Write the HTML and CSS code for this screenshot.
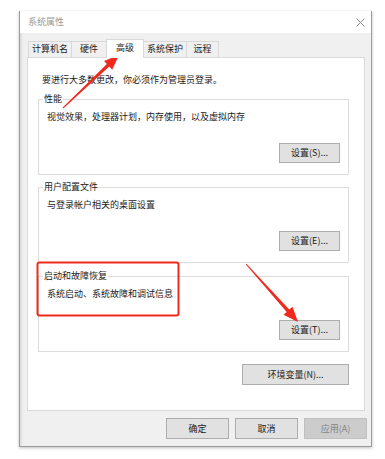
FILE: index.html
```html
<!DOCTYPE html>
<html lang="zh-CN">
<head>
<meta charset="utf-8">
<title>系统属性</title>
<link rel="stylesheet" href="styles.css">
</head>
<body>
<div class="window">
  <div class="titlebar">
    <span class="title">系统属性</span>
    <svg class="close" width="9" height="9" viewBox="0 0 9 9"><path d="M0.5 0.5L8.5 8.5M8.5 0.5L0.5 8.5" stroke="#8c8c8c" stroke-width="1" fill="none"/></svg>
  </div>
  <div class="tabs">
    <div class="tab t1">计算机名</div>
    <div class="tab t2">硬件</div>
    <div class="tab t3 active">高级</div>
    <div class="tab t4">系统保护</div>
    <div class="tab t5">远程</div>
  </div>
  <div class="panel">
    <p class="intro">要进行大多数更改，你必须作为管理员登录。</p>
    <fieldset class="group">
      <legend>性能</legend>
      <p class="desc">视觉效果，处理器计划，内存使用，以及虚拟内存</p>
      <div class="row"><button class="btn small">设置(S)...</button></div>
    </fieldset>
    <fieldset class="group">
      <legend>用户配置文件</legend>
      <p class="desc">与登录帐户相关的桌面设置</p>
      <div class="row"><button class="btn small">设置(E)...</button></div>
    </fieldset>
    <fieldset class="group g3">
      <legend>启动和故障恢复</legend>
      <p class="desc">系统启动、系统故障和调试信息</p>
      <div class="row"><button class="btn small">设置(T)...</button></div>
    </fieldset>
    <div class="row env-row"><button class="btn env">环境变量(N)...</button></div>
  </div>
  <div class="footer">
    <button class="btn foot">确定</button>
    <button class="btn foot">取消</button>
    <button class="btn foot disabled">应用(A)</button>
  </div>
</div>
<svg class="annot" width="385" height="459" viewBox="0 0 385 459">
  <rect x="37.5" y="262.5" width="141" height="53" rx="2" ry="2" fill="none" stroke="#ee2a1f" stroke-width="2"/>
  <polygon fill="#ee2a1f" points="63.3,108.4 109.3,66.6 112.2,69.7 119,55 104.0,60.9 106.9,64.0 62.7,107.6"/>
  <polygon fill="#ee2a1f" points="245.6,264.3 286.7,312.0 283.5,314.8 298,322 292.5,306.8 289.3,309.6 246.4,263.7"/>
</svg>
</body>
</html>
```
FILE: styles.css
```css
html, body {
  margin: 0;
  padding: 0;
  background: #ffffff;
}
body {
  font-family: "Noto Sans CJK SC", "Noto Sans", sans-serif;
  font-size: 9px;
  color: #1a1a1a;
  position: relative;
  width: 385px;
  height: 459px;
  overflow: hidden;
}
.window {
  box-sizing: border-box;
  margin: 11px 0 0 19px;
  width: 353px;
  background: #f0f0f0;
  border: 1px solid #9c9c9c;
  border-top: none;
  box-shadow: 0 1px 3px rgba(0,0,0,0.25), inset 3px 0 3px -2px rgba(0,0,0,0.12);
  padding-bottom: 7px;
}
.titlebar {
  height: 22px;
  background: #ffffff;
  display: flex;
  align-items: center;
  justify-content: space-between;
  padding: 0 6px 0 8px;
}
.title {
  color: #9a9a9a;
  line-height: 16px;
}
.close {
  display: block;
}
.tabs {
  height: 24px;
  display: flex;
  align-items: flex-end;
  padding-left: 8px;
}
.tab {
  box-sizing: border-box;
  height: 16px;
  line-height: 14px;
  text-align: center;
  border: 1px solid #d9d9d9;
  border-bottom: none;
  margin-right: -1px;
  background: #f0f0f0;
}
.t1 { width: 44px; }
.t2 { width: 36px; }
.t3 { width: 38px; }
.t4 { width: 44px; }
.t5 { width: 33px; }
.tab.active {
  height: 19px;
  line-height: 15px;
  background: #ffffff;
  margin-bottom: -1px;
  position: relative;
  z-index: 1;
  padding-bottom: 2px;
}
.panel {
  box-sizing: border-box;
  margin: 0 6px 0 7px;
  background: #ffffff;
  border: 1px solid #d9d9d9;
  padding: 14px 15px 25px 10px;
}
.intro {
  margin: 0 0 0 4px;
  line-height: 16px;
}
.group {
  margin: 3px 0 0 0;
  padding: 0 8px 11px 4px;
  border: 1px solid #dcdcdc;
  min-width: 0;
}
.group + .group {
  margin-top: 4px;
}
.group.g3 {
  margin-top: 5px;
}
.group legend {
  padding: 0 1px;
  line-height: 16px;
}
.desc {
  margin: 2px 0 0 4px;
  line-height: 16px;
}
.row {
  display: flex;
  justify-content: flex-end;
}
.group .row {
  margin-top: 18px;
}
.btn {
  box-sizing: border-box;
  font-family: inherit;
  font-size: 9px;
  color: #1a1a1a;
  background: #e1e1e1;
  border: 1px solid #adadad;
  border-radius: 0;
  padding: 0;
  margin: 0;
  line-height: 16px;
}
.btn.small {
  width: 61px;
  height: 20px;
}
.env-row {
  margin-top: 12px;
}
.btn.env {
  width: 107px;
  height: 21px;
}
.footer {
  display: flex;
  justify-content: flex-end;
  gap: 6px;
  margin-top: 7px;
  padding-right: 4px;
}
.btn.foot {
  width: 63px;
  height: 21px;
}
.btn.disabled {
  background: #cccccc;
  border-color: #bfbfbf;
  color: #858585;
}
.annot {
  position: absolute;
  left: 0;
  top: 0;
  pointer-events: none;
}
```
